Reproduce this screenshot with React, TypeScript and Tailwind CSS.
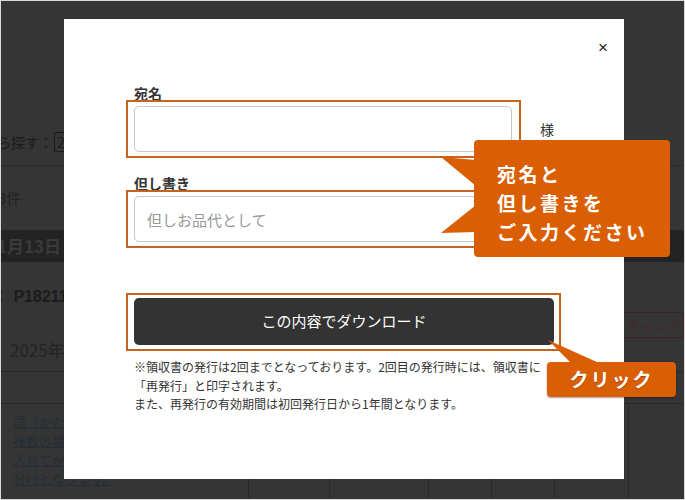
import React from 'react';

const FONT = "font-['Noto_Sans_CJK_JP','Noto_Sans',sans-serif]";

const LINKS = ['語（かたかな）は全角で', '複数の場合はスペースを', '入れてから続けて入力してください。', '分けとなります。'];

const App: React.FC = () => {
  return (
    <div className={`relative w-[685px] h-[500px] overflow-hidden border border-[#d9d9d9] bg-[#353535] ${FONT}`}>
      {/* page behind the overlay */}
      <div className="flex flex-col h-full">
        <div className="h-[125px] shrink-0" />
        <div className="h-[32px] flex items-center -ml-[18px] text-[14px] text-[#1b1b1b] whitespace-nowrap">
          <span>から探す：</span>
          <span className="ml-[1px] border border-[#1b1b1b] px-[2px] leading-[18px]">2025年</span>
        </div>
        <div className="h-[7px] shrink-0" />
        <div className="border-t border-dotted border-[#1f1f1f]" />
        <div className="h-[64px] flex items-center -ml-[3px] text-[15px] text-[#222]">3件</div>
        <div className="h-[32px] flex items-center bg-[#232323] -ml-[4px] text-[17px] font-bold text-[#3a3a3a] whitespace-nowrap">
          1月13日（月）
        </div>
        <div className="flex h-[110px] border-b border-[#2a2a2a]">
          <div className="flex-1 flex flex-col pt-[18px] whitespace-nowrap">
            <div className="h-[34px] flex items-center -ml-[8px] text-[16px] font-bold text-[#1c1c1c] font-['Liberation_Sans','Noto_Sans_CJK_JP',sans-serif]">
              ：&nbsp;P18211
            </div>
            <div className="mt-[16px] h-[40px] flex items-center ml-[9px] text-[17px] text-[#232323]">2025年1月13日</div>
          </div>
          <div className="w-[62px] pt-[50px]">
            <div className="h-[26px] border border-[#3a2424] flex items-center pl-[3px] text-[14px] text-[#432a2a] whitespace-nowrap">
              キャンセル
            </div>
          </div>
        </div>
        <div className="flex h-[32px] border-b border-[#2a2a2a]">
          <div className="flex-1" />
          <div className="w-[58px] border-l border-[#2a2a2a]" />
        </div>
        <div className="flex flex-1">
          <div className="w-[247px] pt-[8px] pl-[12px] text-[13px] leading-[19px] text-[#252d36]">
            {LINKS.map(l => (
              <div key={l}>
                <span className="underline">{l}</span>
              </div>
            ))}
          </div>
          <div className="w-[81px] border-l border-[#2a2a2a]" />
          <div className="w-[99px] border-l border-[#2a2a2a]" />
          <div className="w-[63px] border-l border-[#2a2a2a]" />
          <div className="w-[63px] border-l border-[#2a2a2a]" />
          <div className="w-[74px] border-l border-[#2a2a2a]" />
          <div className="flex-1 border-l border-[#2a2a2a]" />
        </div>
      </div>

      {/* modal */}
      <div className="absolute left-[63px] top-[18px] w-[560px] h-[460px] bg-white text-[#333]">
        <div className="h-[66px] flex justify-end pr-[16px] pt-[19px]">
          <span className="leading-[20px] text-[17px] text-[#222] font-['Liberation_Sans',sans-serif]">×</span>
        </div>
        <div className="pl-[62px]">
          <div className="ml-[8px] text-[14px] font-bold leading-[16px]">宛名</div>
          <div className="-mt-[1px] flex items-center">
            <div className="border-2 border-[#c8631c] pl-[6px] pr-[7px] py-[4px]">
              <input
                readOnly
                className="block w-[378px] h-[46px] border border-[#c8c8c8] rounded-[5px] px-[12px] text-[15px] outline-none"
              />
            </div>
            <span className="ml-[19px] text-[14px]">様</span>
          </div>

          <div className="mt-[17px] ml-[8px] text-[14px] font-bold leading-[16px]">但し書き</div>
          <div className="-mt-[1px] flex">
            <div className="border-2 border-[#c8631c] pl-[6px] pr-[7px] py-[4px]">
              <input
                readOnly
                placeholder="但しお品代として"
                className="block w-[378px] h-[46px] border border-[#c8c8c8] rounded-[5px] px-[12px] text-[15px] outline-none placeholder:text-[#999]"
              />
            </div>
          </div>

          <div className="mt-[45px] flex">
            <div className="border-2 border-[#c8631c] pl-[6px] pr-[5px] pt-[3px] pb-[4px]">
              <button className="block w-[420px] h-[47px] bg-[#333] rounded-[5px] text-white text-[15px]">
                この内容でダウンロード
              </button>
            </div>
          </div>

          <p className="mt-[7px] ml-[8px] w-[420px] text-[12px] leading-[18.5px] text-[#333]">
            ※領収書の発行は2回までとなっております。2回目の発行時には、領収書に
            <br />
            「再発行」と印字されます。
            <br />
            また、再発行の有効期間は初回発行日から1年間となります。
          </p>
        </div>
      </div>

      {/* callout pointers */}
      <svg className="absolute left-[-1px] top-[-1px] w-[685px] h-[500px] pointer-events-none" viewBox="0 0 685 500">
        <polygon points="441,157 476,160 476,186" fill="#da5e04" />
        <polygon points="441,233 476,205 476,232" fill="#da5e04" />
        <polygon points="548,340 571,363 599,363" fill="#da5e04" />
      </svg>

      {/* callouts */}
      <div className="absolute left-[473px] top-[139px] w-[196px] h-[117px] bg-[#da5e04] rounded-[4px] pl-[23px] pt-[19px] text-white text-[19px] font-bold leading-[29px] tracking-[2.5px]">
        <div>宛名と</div>
        <div>但し書きを</div>
        <div>ご入力ください</div>
      </div>
      <div className="absolute left-[546px] top-[361px] w-[129px] h-[35px] bg-[#da5e04] rounded-[4px] shadow-[0_1px_2px_rgba(0,0,0,0.35)] flex items-center justify-center text-white text-[19px] font-bold tracking-[2px] [text-shadow:0_1px_1px_rgba(0,0,0,0.3)]">
        クリック
      </div>
    </div>
  );
};

export default App;
